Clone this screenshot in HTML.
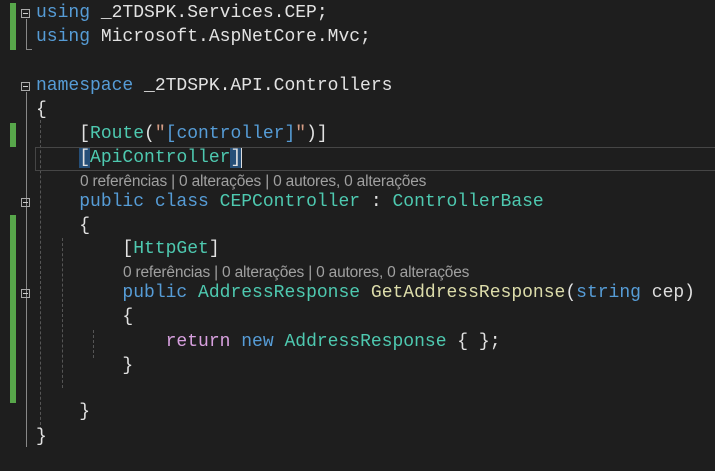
<!DOCTYPE html>
<html><head><style>
body{margin:0;width:715px;height:471px;background:#1e1e1e;overflow:hidden;position:relative;font-family:"Liberation Mono",monospace;}
.l{position:absolute;left:36px;font-size:18px;line-height:24px;color:#e2e2e2;white-space:pre;}
.cl{position:absolute;font-family:"Liberation Sans",sans-serif;font-size:15.5px;line-height:18px;color:#a0a0a0;white-space:pre;letter-spacing:-0.2px}
.k{color:#569cd6}.t{color:#4ec9b0}.s{color:#d69d85}.m{color:#dcdcaa}.r{color:#d8a0df}.p{color:#dcdcdc}
.g{position:absolute;left:10px;width:6px;background:#57a64a}
.b{position:absolute;left:21px;width:9px;height:9px;border:1px solid #aaa;box-sizing:border-box}
.b:after{content:"";position:absolute;left:1px;top:3px;width:5px;height:1px;background:#ccc}
.v{position:absolute;border-left:1px solid #888}
.d{position:absolute;border-left:1px dashed #555}
</style></head><body>
<div class="g" style="top:3px;height:47px"></div>
<div class="g" style="top:123px;height:24px"></div>
<div class="g" style="top:215px;height:188px"></div>
<div class="b" style="top:9px"></div>
<div class="v" style="left:26px;top:19px;height:30px"></div>
<div class="v" style="left:26px;top:49px;width:5px;border-bottom:1px solid #888;height:0"></div>
<div class="b" style="top:82px"></div>
<div class="v" style="left:26px;top:92px;height:355px"></div>
<div class="b" style="top:198px"></div>
<div class="b" style="top:289px"></div>
<div class="d" style="left:40px;top:120px;height:310px"></div>
<div class="d" style="left:62px;top:238px;height:150px"></div>
<div class="d" style="left:93px;top:330px;height:28px"></div>
<div style="position:absolute;left:35px;top:147px;width:690px;height:22px;border:1px solid #464646"></div>
<div class="l" style="top:1px"><span class="k">using</span> _2TDSPK.Services.CEP;</div>
<div class="l" style="top:25px"><span class="k">using</span> Microsoft.AspNetCore.Mvc;</div>
<div class="l" style="top:74px"><span class="k">namespace</span> _2TDSPK.API.Controllers</div>
<div class="l" style="top:98px">{</div>
<div class="l" style="top:122px">    [<span class="t">Route</span>(<span class="s">"</span><span class="k">[controller]</span><span class="s">"</span>)]</div>
<div class="l" style="top:146px">    <span style="background:#264f78">[</span><span class="t">ApiController</span><span style="background:#264f78">]</span><span style="border-left:1px solid #ddd"></span></div>
<div class="cl" style="left:80px;top:173px">0 referências | 0 alterações | 0 autores, 0 alterações</div>
<div class="l" style="top:190px">    <span class="k">public class</span> <span class="t">CEPController</span> : <span class="t">ControllerBase</span></div>
<div class="l" style="top:214px">    {</div>
<div class="l" style="top:237px">        [<span class="t">HttpGet</span>]</div>
<div class="cl" style="left:123px;top:264px">0 referências | 0 alterações | 0 autores, 0 alterações</div>
<div class="l" style="top:281px">        <span class="k">public</span> <span class="t">AddressResponse</span> <span class="m">GetAddressResponse</span>(<span class="k">string</span> <span class="p">cep</span>)</div>
<div class="l" style="top:305px">        {</div>
<div class="l" style="top:330px">            <span class="r">return</span> <span class="k">new</span> <span class="t">AddressResponse</span> { };</div>
<div class="l" style="top:354px">        }</div>
<div class="l" style="top:400px">    }</div>
<div class="l" style="top:425px">}</div>
</body></html>
